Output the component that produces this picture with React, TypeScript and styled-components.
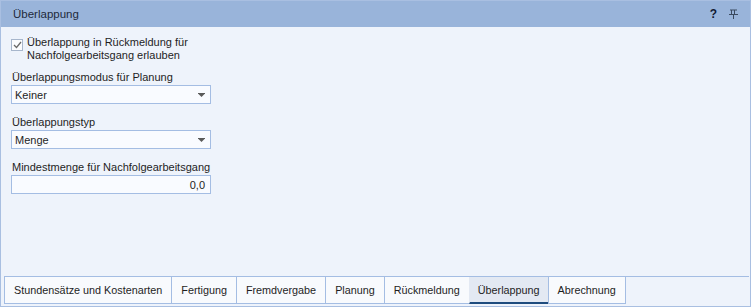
import React from "react";
import styled, { createGlobalStyle } from "styled-components";

const Global = createGlobalStyle`
  html, body { margin: 0; padding: 0; }
  body { font-family: "Liberation Sans", Arial, sans-serif; font-size: 11px; color: #1e1e1e; background: #ffffff; }
  * { box-sizing: border-box; }
`;

const Window = styled.div`
  width: 751px;
  height: 307px;
  display: flex;
  flex-direction: column;
  border: 1px solid #a9bfe1;
  background: #eef3fb;
`;

const Header = styled.div`
  height: 26px;
  flex: none;
  display: flex;
  align-items: center;
  padding: 0 12px 0 12px;
  background: #99b4da;
  color: #1e2a3a;
  font-size: 11.5px;
`;

const Title = styled.div`
  flex: 1;
`;

const HeaderIcons = styled.div`
  display: flex;
  align-items: center;
  gap: 12px;
`;

const Help = styled.span`
  font-weight: bold;
  font-size: 12px;
  color: #111a33;
`;

const Content = styled.div`
  flex: 1;
  padding: 9px 9px 0 9px;
  display: flex;
  flex-direction: column;
`;

const CheckRow = styled.label`
  display: flex;
  align-items: flex-start;
  gap: 4px;
  line-height: 12.5px;
  margin-left: 1px;
`;

const CheckBox = styled.span`
  width: 12px;
  height: 12px;
  margin-top: 3px;
  border: 1px solid #a7b6cc;
  background: #fbfcfe;
  display: flex;
  align-items: center;
  justify-content: center;
  flex: none;
`;

const Field = styled.div<{ $mt: number }>`
  display: flex;
  flex-direction: column;
  margin-top: ${(p) => p.$mt}px;
  margin-left: 1px;
`;

const Label = styled.div`
  line-height: 13px;
  margin-bottom: 1px;
  margin-left: 1px;
`;

const Box = styled.div<{ $align?: string }>`
  width: 200px;
  height: 19px;
  border: 1px solid #a4bde3;
  background: #f9fbff;
  display: flex;
  align-items: center;
  justify-content: ${(p) => (p.$align === "right" ? "flex-end" : "space-between")};
  padding: 0 5px 0 3px;
`;

const TabBar = styled.div`
  height: 30px;
  flex: none;
  border-top: 1px solid #a4bde3;
  margin: 0 1px 0 3px;
  display: flex;
  padding-left: 1px;
`;

const Tab = styled.div<{ $active?: boolean }>`
  height: 27px;
  display: flex;
  align-items: center;
  font-size: 10.8px;
  padding: 0 ${(p) => (p.$active ? 8 : 9)}px;
  border-left: 1px solid #a4bde3;
  margin-left: -1px;
  border-right: 1px solid #a4bde3;
  background: ${(p) => (p.$active ? "#e3e9f3" : "#f8fafd")};
  border-bottom: ${(p) => (p.$active ? "2px solid #1f4c7e" : "1px solid #a4bde3")};
  ${(p) => (p.$active ? "border-left-color: transparent; border-right-color: transparent;" : "")}
`;

const tabs = [
  "Stundensätze und Kostenarten",
  "Fertigung",
  "Fremdvergabe",
  "Planung",
  "Rückmeldung",
  "Überlappung",
  "Abrechnung",
];

const DropArrow = () => (
  <svg width="7" height="4" viewBox="0 0 7 4">
    <rect x="0" y="0" width="7" height="1" fill="#5a5a5a" />
    <path d="M0.5 1 L6.5 1 L3.5 4 Z" fill="#5a5a5a" />
  </svg>
);

export default function App() {
  return (
    <>
      <Global />
      <Window>
        <Header>
          <Title>Überlappung</Title>
          <HeaderIcons>
            <Help>?</Help>
            <svg width="9" height="10" viewBox="0 0 9 10">
              <rect x="1" y="0.5" width="7" height="1" fill="#3a4a60" />
              <rect x="2" y="1" width="1" height="4" fill="#3a4a60" />
              <rect x="5" y="1" width="1" height="4" fill="#3a4a60" />
              <rect x="0" y="5" width="9" height="1" fill="#3a4a60" />
              <rect x="4" y="6" width="1" height="4" fill="#3a4a60" />
            </svg>
          </HeaderIcons>
        </Header>
        <Content>
          <CheckRow>
            <CheckBox>
              <svg width="9" height="8" viewBox="0 0 9 8">
                <path d="M1 4 L3.5 6.5 L8 1" fill="none" stroke="#6a6a6a" strokeWidth="1.3" />
              </svg>
            </CheckBox>
            <span>
              Überlappung in Rückmeldung für
              <br />
              Nachfolgearbeitsgang erlauben
            </span>
          </CheckRow>
          <Field $mt={10}>
            <Label>Überlappungsmodus für Planung</Label>
            <Box>
              <span>Keiner</span>
              <DropArrow />
            </Box>
          </Field>
          <Field $mt={12}>
            <Label>Überlappungstyp</Label>
            <Box>
              <span>Menge</span>
              <DropArrow />
            </Box>
          </Field>
          <Field $mt={12}>
            <Label>Mindestmenge für Nachfolgearbeitsgang</Label>
            <Box $align="right">
              <span>0,0</span>
            </Box>
          </Field>
        </Content>
        <TabBar>
          {tabs.map((t) => (
            <Tab key={t} $active={t === "Überlappung"}>
              {t}
            </Tab>
          ))}
        </TabBar>
      </Window>
    </>
  );
}
